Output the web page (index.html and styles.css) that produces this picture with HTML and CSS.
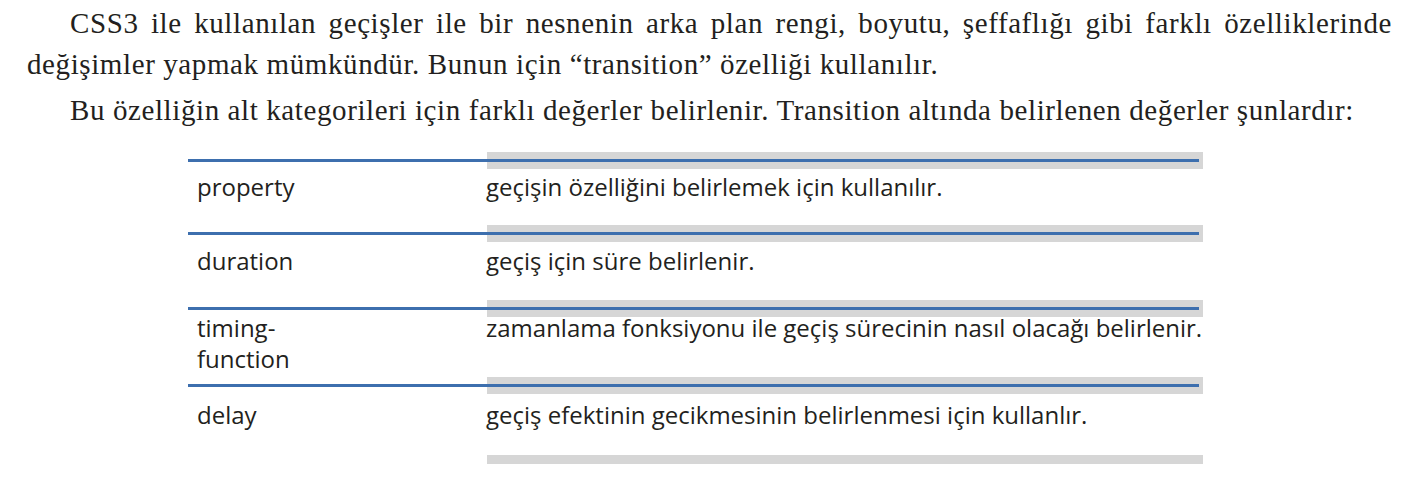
FILE: index.html
```html
<!DOCTYPE html>
<html lang="tr">
<head>
<meta charset="utf-8">
<title>CSS3 Geçişler</title>
<link rel="stylesheet" href="styles.css">
</head>
<body>
<main class="page">
  <p class="para para-first">CSS3 ile kullanılan geçişler ile bir nesnenin arka plan rengi, boyutu, şeffaflığı gibi farklı özelliklerinde değişimler yapmak mümkündür. Bunun için “transition” özelliği kullanılır.</p>
  <p class="para">Bu özelliğin alt kategorileri için farklı değerler belirlenir. Transition altında belirlenen değerler şunlardır:</p>

  <div class="spec">
    <div class="spec-row row-1">
      <div class="spec-key">property</div>
      <div class="spec-val">geçişin özelliğini belirlemek için kullanılır.</div>
    </div>
    <div class="spec-row row-2">
      <div class="spec-key">duration</div>
      <div class="spec-val">geçiş için süre belirlenir.</div>
    </div>
    <div class="spec-row row-3">
      <div class="spec-key">timing-<br>function</div>
      <div class="spec-val">zamanlama fonksiyonu ile geçiş sürecinin nasıl olacağı belirlenir.</div>
    </div>
    <div class="spec-row row-4">
      <div class="spec-key">delay</div>
      <div class="spec-val">geçiş efektinin gecikmesinin belirlenmesi için kullanlır.</div>
    </div>
    <div class="spec-end"></div>
  </div>
</main>
</body>
</html>
```

FILE: styles.css
```css
html, body {
  margin: 0;
  padding: 0;
  background: #ffffff;
}

.page {
  padding-top: 3px;
}

.para {
  margin: 0 20px 5px 27px;
  font-family: "Liberation Serif", "Times New Roman", serif;
  font-size: 29px;
  letter-spacing: 0.6px;
  line-height: 41px;
  color: #231f20;
  text-indent: 43px;
  text-align: justify;
}

.spec {
  margin: 21px 0 0 188px;
  width: 1015px;
  font-family: "Open Sans", "Noto Sans", sans-serif;
  font-size: 24px;
  line-height: 31px;
  color: #231f20;
}

.spec-row {
  display: grid;
  grid-template-columns: 298px 1fr;
  box-sizing: border-box;
  background:
    linear-gradient(#3d6fae, #3d6fae) 0 7px / 1011px 3px no-repeat,
    linear-gradient(#d6d6d6, #d6d6d6) 299px 0 / 716px 17px no-repeat;
}

.row-1 { height: 73px; padding-top: 19px; }
.row-2 { height: 75px; padding-top: 20px; }
.row-3 { height: 77px; padding-top: 12px; }
.row-4 { height: 78px; padding-top: 22px; }

.spec-key {
  padding-left: 9px;
}

.spec-val {
  white-space: nowrap;
}

.spec-end {
  margin-left: 299px;
  width: 716px;
  height: 9px;
  background: #d6d6d6;
}
```
